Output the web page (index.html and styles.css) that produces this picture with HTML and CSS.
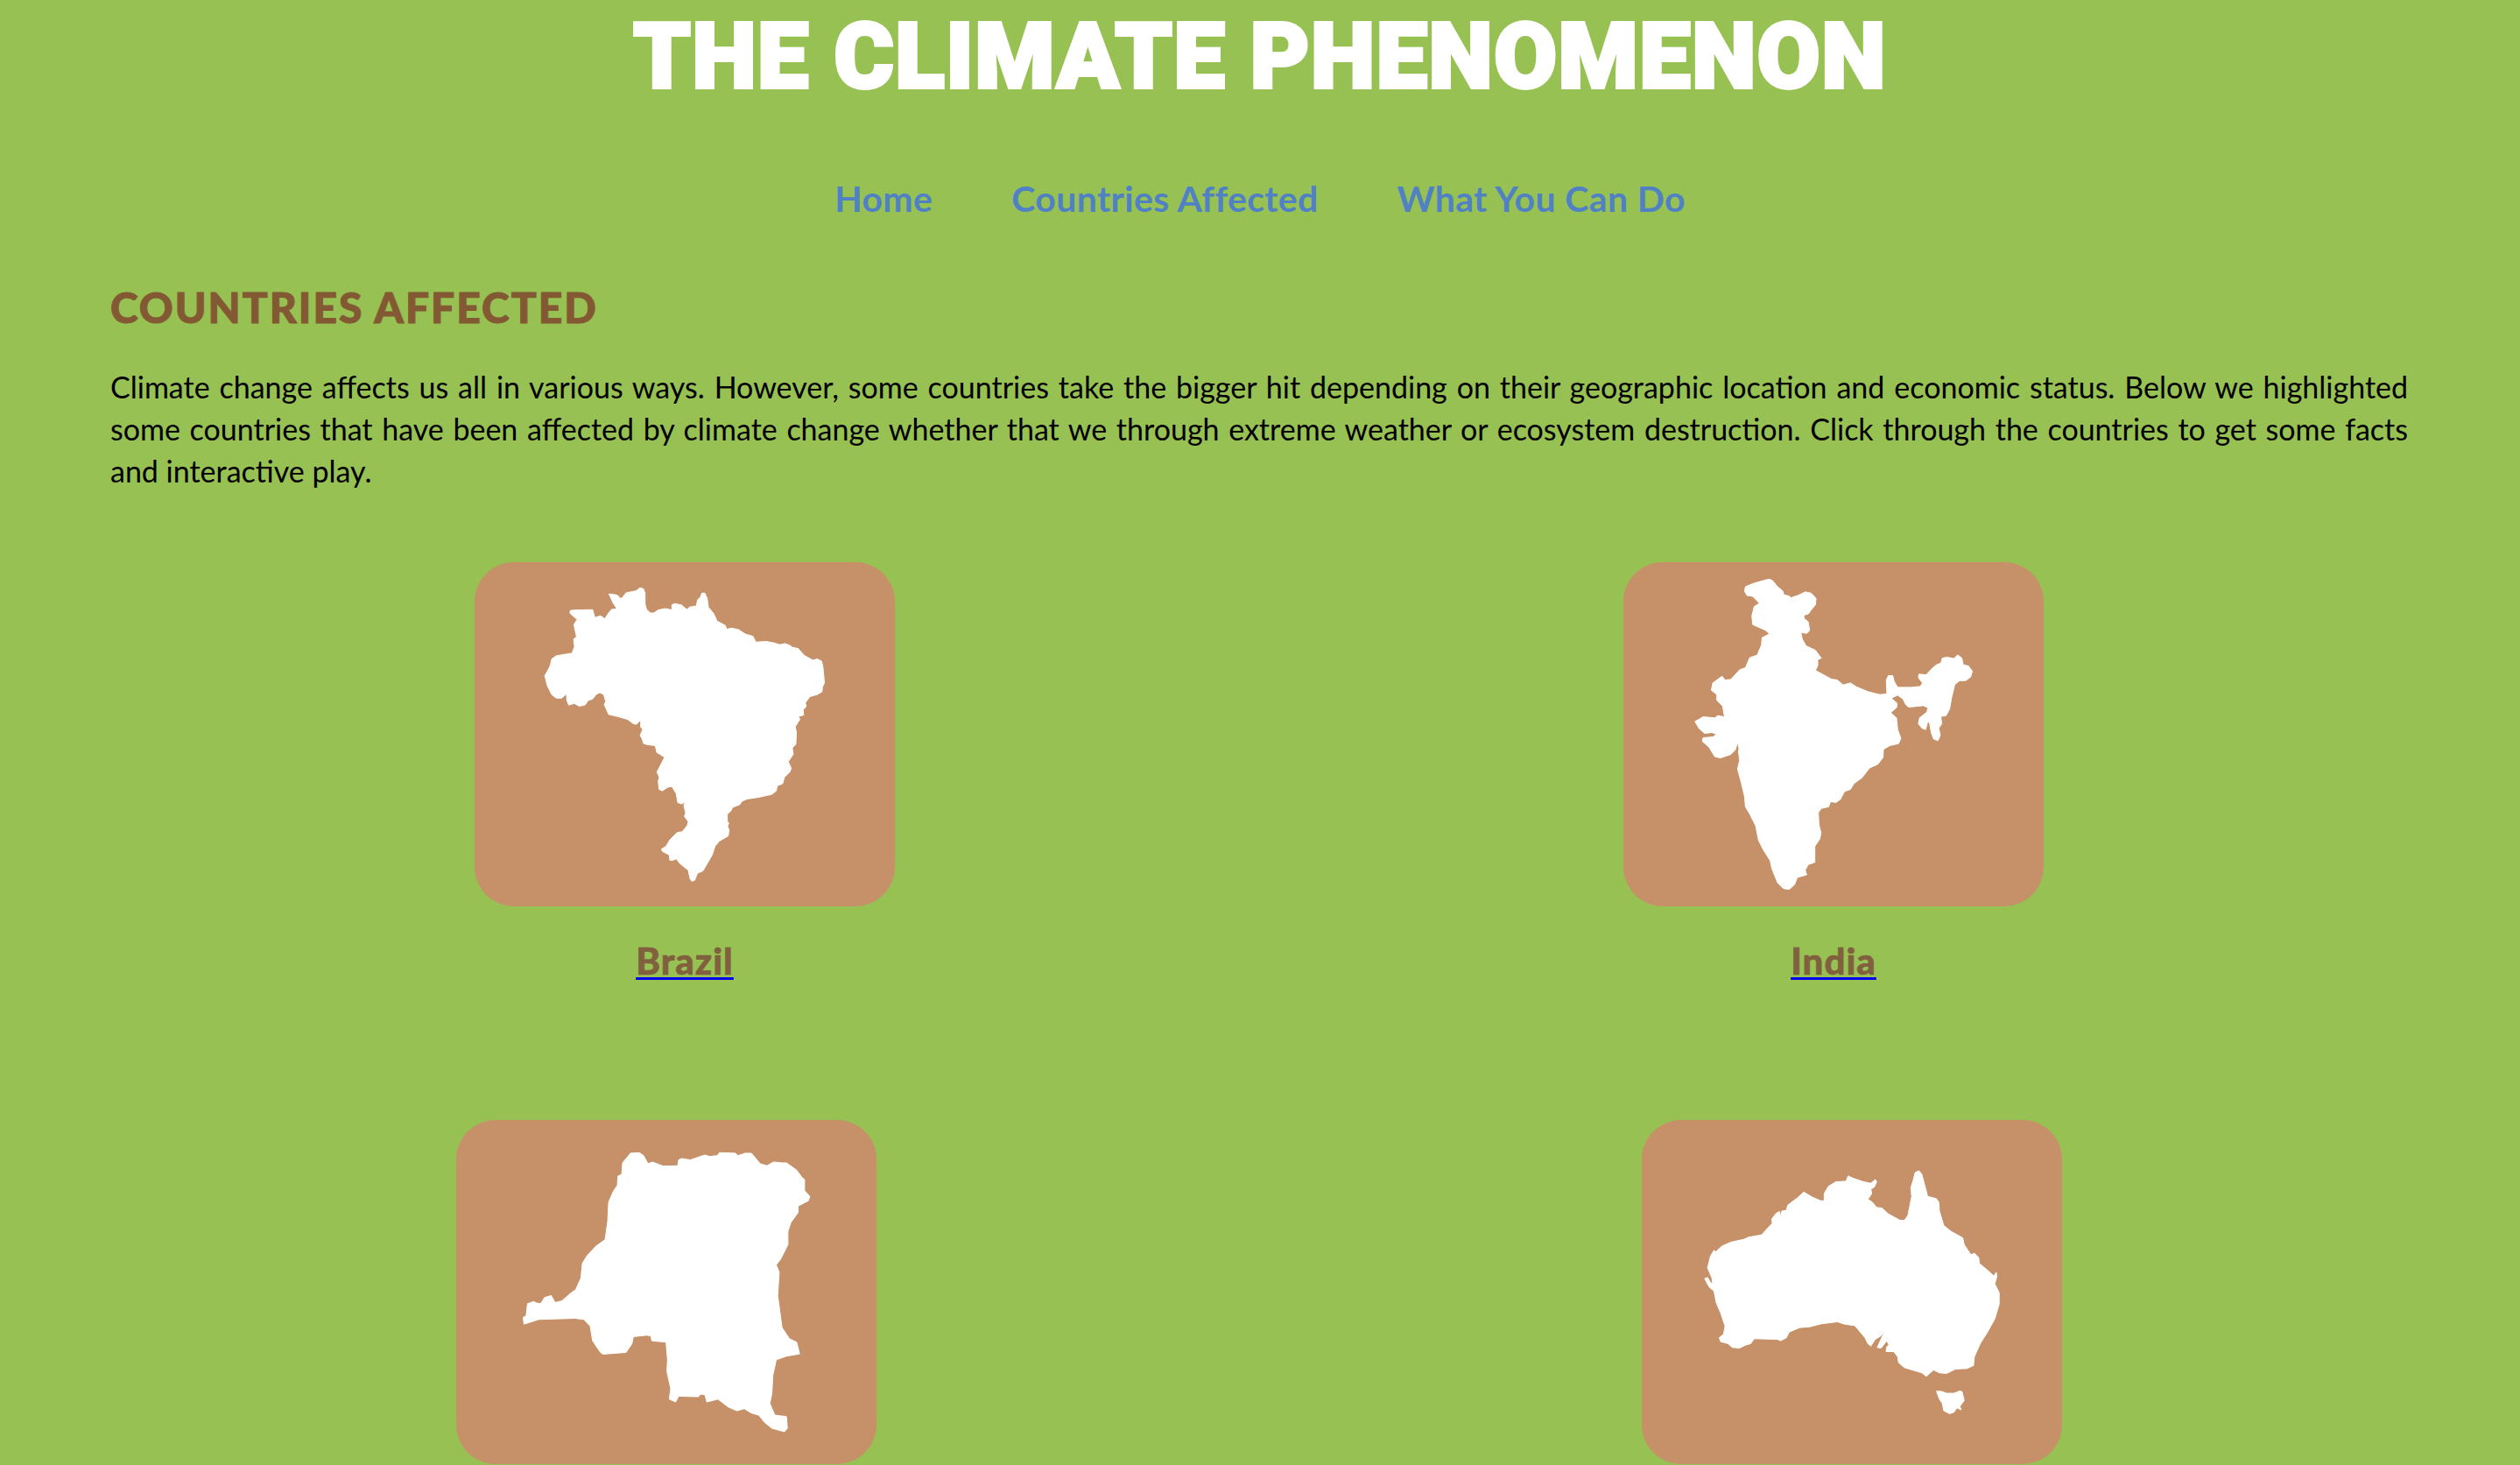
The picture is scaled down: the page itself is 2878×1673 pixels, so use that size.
FILE: index.html
```html
<!DOCTYPE html>
<html lang="en">
<head>
<meta charset="utf-8">
<title>The Climate Phenomenon</title>
<link rel="stylesheet" href="styles.css">
</head>
<body>
<header class="site-header">
  <h1 class="site-title">THE CLIMATE PHENOMENON</h1>
  <nav class="site-nav">
    <a href="#">Home</a>
    <a href="#">Countries Affected</a>
    <a href="#">What You Can Do</a>
  </nav>
</header>
<main class="content">
  <h2 class="section-title">COUNTRIES AFFECTED</h2>
  <p class="intro">Climate change affects us all in various ways. However, some countries take the bigger hit depending on their geographic location and economic status. Below we highlighted some countries that have been affected by climate change whether that we through extreme weather or ecosystem destruction. Click through the countries to get some facts and interactive play.</p>
  <div class="row row-first">
    <figure class="country">
      <svg class="map" viewBox="66 66 1440 1180"><polygon class="land" points="526,175 545,177 556,180 565,190 572,188 585,171 605,167 620,164 632,154 644,157 650,172 650,210 655,228 668,240 680,240 695,230 720,225 742,230 742,212 752,208 775,213 793,228 803,220 826,216 830,195 840,185 845,172 855,172 863,190 867,220 885,242 897,268 925,283 930,296 945,292 970,297 995,313 1020,320 1030,340 1065,338 1090,342 1112,349 1130,345 1148,352 1155,358 1175,362 1195,385 1225,402 1240,398 1255,405 1260,425 1265,480 1258,495 1257,510 1240,520 1215,527 1200,548 1202,562 1192,572 1194,590 1176,595 1181,605 1165,630 1169,650 1167,690 1155,703 1158,725 1141,750 1151,772 1147,785 1128,803 1122,825 1103,833 1100,850 1085,862 1040,872 1000,878 982,886 975,897 950,907 945,918 932,930 932,955 937,960 933,972 938,985 935,1005 905,1022 890,1040 880,1070 860,1105 848,1125 830,1132 820,1157 810,1160 804,1150 798,1122 770,1100 757,1083 745,1088 735,1088 733,1070 710,1058 706,1050 722,1040 735,1018 760,993 778,990 795,968 798,955 785,938 789,925 783,900 788,888 775,895 762,890 757,860 742,835 727,838 710,850 698,845 695,815 699,805 691,785 717,735 690,718 685,695 660,692 645,688 640,672 633,660 640,645 641,638 635,632 635,607 620,622 610,620 590,605 555,595 525,588 515,565 510,555 515,543 508,520 495,513 482,520 470,535 455,540 445,555 425,560 407,550 388,556 382,540 380,517 365,532 345,532 330,520 315,490 306,455 315,440 325,420 330,398 345,387 380,381 400,378 408,355 405,330 415,322 406,280 417,262 393,242 393,232 410,230 470,229 478,256 497,250 512,260 525,240 535,228 553,226 540,205"/></svg>
      <figcaption><a href="#">Brazil</a></figcaption>
    </figure>
    <figure class="country">
      <svg class="map" viewBox="72 66 1440 1180"><polygon class="land" points="487,165 490,150 520,138 570,124 582,128 600,150 618,165 622,178 640,182 645,188 670,180 695,168 715,172 732,190 730,212 715,230 706,243 690,248 692,260 705,270 710,300 700,310 680,307 685,330 698,353 730,368 750,395 738,400 738,420 730,437 785,467 805,470 825,487 850,480 870,493 910,510 950,520 975,518 973,470 980,455 995,455 1000,475 1012,495 1060,495 1090,492 1097,480 1083,462 1085,450 1110,452 1130,430 1145,418 1160,412 1165,395 1180,392 1205,396 1218,384 1232,395 1237,418 1255,422 1268,440 1262,460 1245,472 1225,472 1208,485 1197,530 1190,570 1178,592 1160,595 1163,620 1153,635 1158,660 1150,678 1135,672 1127,650 1120,610 1113,620 1108,640 1095,635 1083,620 1087,600 1112,580 1116,565 1100,558 1050,563 1040,555 1030,535 1012,522 990,532 1010,550 1008,565 988,582 1008,600 1012,640 1023,670 1015,688 985,695 963,708 962,735 945,758 915,772 890,805 862,825 850,845 830,852 815,880 800,890 782,887 775,905 750,910 740,925 742,965 749,995 745,1015 728,1040 728,1095 705,1103 695,1122 700,1138 668,1147 658,1172 640,1188 620,1185 600,1165 580,1115 575,1090 550,1050 535,1020 525,970 505,930 490,905 487,870 475,820 463,775 470,745 466,715 468,705 463,684 455,710 440,725 405,737 385,733 365,700 342,680 345,668 380,665 390,655 375,650 350,653 330,635 317,612 330,605 345,596 385,600 395,592 418,597 412,560 392,540 392,520 373,505 378,480 410,457 420,470 440,468 470,435 490,428 505,393 530,385 545,350 547,325 572,312 560,300 515,280 512,250 520,218 538,207 515,183 495,180"/></svg>
      <figcaption><a href="#">India</a></figcaption>
    </figure>
  </div>
  <div class="row row-second">
    <figure class="country">
      <svg class="map" viewBox="33 28 1440 1180"><polygon class="land" points="603,175 630,142 660,140 675,150 690,178 705,172 742,186 792,185 795,165 805,160 835,165 885,148 902,153 928,150 935,140 990,142 998,150 1015,145 1022,142 1045,142 1075,178 1098,185 1120,172 1150,175 1165,175 1200,200 1218,225 1227,232 1227,270 1245,290 1240,305 1205,323 1205,345 1180,380 1170,410 1170,455 1145,505 1130,525 1140,550 1135,630 1147,720 1150,740 1175,778 1200,790 1210,830 1165,838 1130,850 1118,905 1115,965 1108,1000 1125,1040 1165,1045 1168,1085 1158,1097 1115,1085 1090,1065 1070,1040 1045,1033 1020,1018 995,1025 965,1012 930,985 892,995 885,970 872,968 862,977 795,975 785,995 763,985 768,950 755,890 757,850 752,790 703,785 700,768 685,766 640,771 635,795 615,825 535,831 527,825 500,785 492,735 470,712 440,708 315,712 265,728 262,705 272,700 277,658 300,650 305,655 322,658 335,637 358,630 372,654 395,648 425,622 442,610 460,570 465,520 480,495 510,462 543,438 552,375 555,310 570,275 585,252 587,220 600,215"/></svg>
    </figure>
    <figure class="country">
      <svg class="map" viewBox="15 28 1440 1180"><polygon class="land" points="640,305 640,280 655,255 680,240 715,238 722,220 740,228 775,240 800,245 815,232 820,240 812,258 800,265 803,280 790,300 805,310 820,328 838,330 860,350 900,372 915,372 927,355 940,290 937,260 945,235 952,208 965,202 975,215 995,290 1025,298 1033,310 1035,340 1050,390 1075,410 1115,432 1120,455 1143,490 1155,485 1170,500 1172,520 1200,543 1222,563 1230,550 1232,565 1225,590 1240,620 1240,660 1225,710 1200,755 1175,795 1155,840 1152,870 1130,880 1090,882 1060,897 1035,895 1015,885 990,907 975,895 915,877 895,860 892,840 878,822 852,822 855,805 862,800 855,785 835,810 822,808 830,790 850,748 835,768 815,780 800,803 790,795 780,775 755,745 745,733 710,728 685,720 630,727 590,737 555,740 520,755 510,775 490,785 480,780 400,778 388,795 370,800 350,810 325,808 310,795 285,788 280,775 295,762 300,735 285,690 270,655 262,615 245,600 230,572 240,568 250,585 258,590 255,570 240,535 250,495 262,475 268,480 290,460 320,447 365,437 380,430 425,422 462,382 460,368 475,348 487,342 490,362 495,340 510,338 515,320 548,295 570,275 600,293 628,305"/><polygon class="land" points="1025,958 1040,958 1060,965 1085,965 1105,957 1113,960 1120,990 1105,1010 1110,1022 1095,1015 1085,1030 1070,1035 1050,1025 1045,1000 1035,985"/></svg>
    </figure>
  </div>
</main>
</body>
</html>
```

FILE: styles.css
```css
* { box-sizing: border-box; }
html, body { margin: 0; padding: 0; }
body {
  background: #97c152;
  font-family: Lato, "Liberation Sans", sans-serif;
  color: #000;
}
.site-header { display: flex; flex-direction: column; align-items: center; }
.site-title {
  margin: 0;
  height: 130px;
  line-height: 130px;
  font-family: Roboto, Lato, sans-serif;
  font-weight: 900;
  font-size: 104px;
  letter-spacing: 1.6px;
  color: #fff;
  -webkit-text-stroke: 4px #fff;
}
.site-nav {
  display: flex;
  gap: 90px;
  margin-top: 72px;
  height: 50px;
  line-height: 50px;
  font-size: 41px;
  font-weight: 700;
  letter-spacing: 0.35px;
}
.site-nav a { color: #4f81c4; text-decoration: none; }
.content { padding: 0 128px 0 126px; }
.section-title {
  margin: 69px 0 0;
  height: 60px;
  line-height: 60px;
  font-size: 48px;
  font-weight: 900;
  letter-spacing: 2px;
  color: #835934;
  -webkit-text-stroke: 1px #835934;
}
.intro {
  margin: 37px 0 0;
  font-size: 34px;
  line-height: 48px;
  text-align: justify;
}
.row { display: flex; justify-content: center; }
.row-first { gap: 832px; margin-top: 80px; }
.row-second { gap: 874px; margin-top: 157px; }
.country { margin: 0; width: 480px; display: flex; flex-direction: column; align-items: center; }
.map { display: block; width: 480px; height: 393px; background: #c69169; border-radius: 45px; }
.land { fill: #fff; stroke: #fff; stroke-width: 3; stroke-linejoin: round; }
figcaption { margin-top: 37px; height: 50px; line-height: 50px; font-size: 42px; font-weight: 900; letter-spacing: 1px; }
figcaption a { color: #80603e; -webkit-text-stroke: 0.6px #80603e; text-decoration: underline #0000ee 3px; text-underline-offset: 3px; }
```
